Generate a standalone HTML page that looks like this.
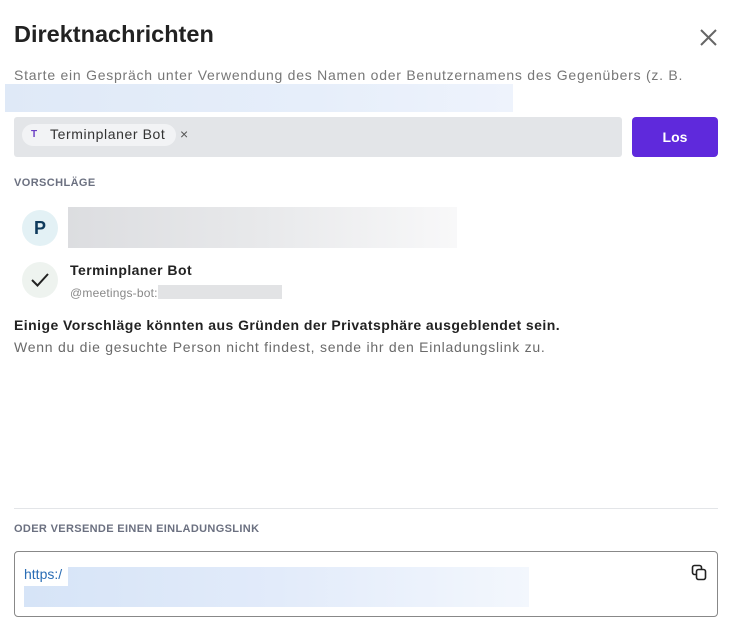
<!DOCTYPE html>
<html><head><meta charset="utf-8"><style>
*{margin:0;padding:0;box-sizing:border-box}
body{width:739px;height:639px;background:#fff;font-family:"Liberation Sans",sans-serif;position:relative;overflow:hidden;color:#1e1f22}
.a{position:absolute;white-space:nowrap}
</style></head><body>
<div class="a" style="left:14px;top:21px;font-size:23.5px;font-weight:600;color:#222">Direktnachrichten</div>
<svg class="a" style="left:699px;top:28px" width="19" height="19" viewBox="0 0 19 19"><path d="M2 2L17 17M17 2L2 17" stroke="#666" stroke-width="2"/></svg>
<div class="a" style="left:14px;top:67px;font-size:14px;color:#777;letter-spacing:0.75px">Starte ein Gespräch unter Verwendung des Namen oder Benutzernamens des Gegenübers (z. B.</div>
<div class="a" style="left:5px;top:84px;width:508px;height:28px;background:linear-gradient(90deg,#dfe9f7,#e6eefa 60%,#eef3fc)"></div>
<div class="a" style="left:14px;top:117px;width:608px;height:40px;background:#e3e5e8;border-radius:3px"></div>
<div class="a" style="left:22px;top:124px;width:154px;height:22px;background:#f2f3f5;border-radius:11px"></div>
<div class="a" style="left:31px;top:129px;font-size:10px;font-weight:700;color:#6b3fc4">T</div>
<div class="a" style="left:50px;top:126px;font-size:14px;color:#333;letter-spacing:0.6px">Terminplaner Bot</div>
<div class="a" style="left:180px;top:126px;font-size:14px;color:#555">×</div>
<div class="a" style="left:632px;top:117px;width:86px;height:40px;background:#5f29dc;border-radius:4px;color:#fff;font-size:14px;font-weight:700;text-align:center;line-height:40px">Los</div>
<div class="a" style="left:14px;top:177px;font-size:11px;font-weight:700;color:#6b7080;letter-spacing:0.4px">VORSCHLÄGE</div>
<div class="a" style="left:22px;top:210px;width:36px;height:36px;border-radius:50%;background:#e3f1f5;color:#0e3a5c;font-weight:700;font-size:18px;text-align:center;line-height:36px">P</div>
<div class="a" style="left:68px;top:207px;width:389px;height:41px;background:linear-gradient(90deg,#dcdde0,#e8e9eb 50%,#f8f8f9)"></div>
<div class="a" style="left:22px;top:262px;width:36px;height:36px;border-radius:50%;background:#eef3ef"></div>
<svg class="a" style="left:31px;top:272px" width="18" height="16" viewBox="0 0 18 16"><path d="M1 8L6.5 13.5L17 2" stroke="#222" stroke-width="2" fill="none"/></svg>
<div class="a" style="left:70px;top:262px;font-size:14px;font-weight:600;color:#222;letter-spacing:0.45px">Terminplaner Bot</div>
<div class="a" style="left:70px;top:286px;font-size:12px;color:#888;letter-spacing:0.2px">@meetings-bot:</div>
<div class="a" style="left:158px;top:285px;width:124px;height:14px;background:#e2e3e5"></div>
<div class="a" style="left:14px;top:317px;font-size:14px;font-weight:600;color:#222;letter-spacing:0.45px">Einige Vorschläge könnten aus Gründen der Privatsphäre ausgeblendet sein.</div>
<div class="a" style="left:14px;top:339px;font-size:14px;color:#6a6a6a;letter-spacing:0.75px">Wenn du die gesuchte Person nicht findest, sende ihr den Einladungslink zu.</div>
<div class="a" style="left:14px;top:508px;width:704px;height:1px;background:#e3e5e8"></div>
<div class="a" style="left:14px;top:523px;font-size:11px;font-weight:700;color:#6b7080;letter-spacing:0.35px">ODER VERSENDE EINEN EINLADUNGSLINK</div>
<div class="a" style="left:14px;top:551px;width:704px;height:66px;border:1px solid #888;border-radius:4px"></div>
<div class="a" style="left:24px;top:567px;width:505px;height:40px;background:linear-gradient(90deg,#d6e4f7,#e2ebfa 50%,#f3f7fd)"></div>
<div class="a" style="left:24px;top:566px;width:44px;height:20px;background:#fff"></div>
<div class="a" style="left:24px;top:566px;font-size:14px;color:#2a6db5">https:/</div>
<svg class="a" style="left:691px;top:564px" width="17" height="17" viewBox="0 0 17 17"><rect x="1.5" y="1.5" width="9" height="9" rx="2" fill="#fff" stroke="#222" stroke-width="1.6"/><rect x="5.5" y="5.5" width="9" height="10" rx="2" fill="#fff" stroke="#222" stroke-width="1.6"/></svg>
</body></html>
